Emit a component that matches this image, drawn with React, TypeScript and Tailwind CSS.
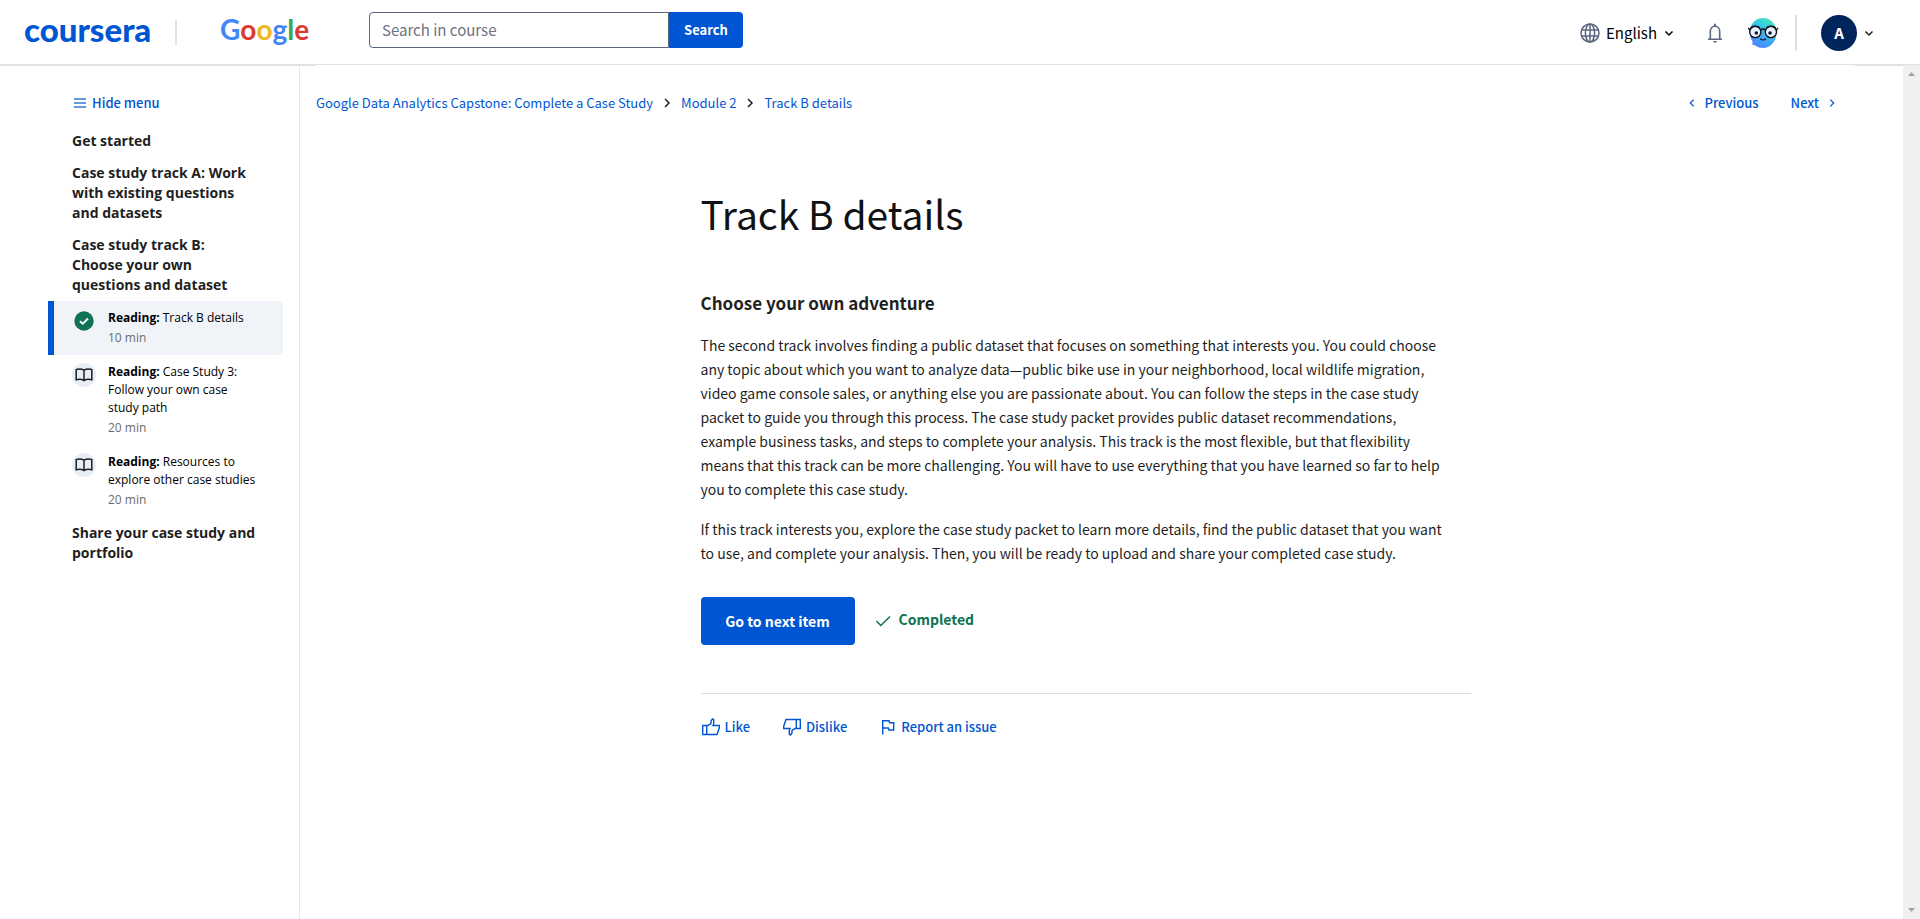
import React from "react";

type ReadingItem = { title: string; minutes: number; active?: boolean };

const readings: ReadingItem[] = [
  { title: "Track B details", minutes: 10, active: true },
  { title: "Case Study 3: Follow your own case study path", minutes: 20 },
  { title: "Resources to explore other case studies", minutes: 20 },
];

function Chevron({ d, className }: { d: string; className: string }) {
  return (
    <svg viewBox="0 0 12 12" className={className} fill="none" stroke="currentColor" strokeWidth="1.5" aria-hidden="true">
      <path d={d} />
    </svg>
  );
}
const DOWN = "M2.5 4.5L6 8l3.5-3.5";
const RIGHT = "M4 2l4 4-4 4";
const LEFT = "M8 2L4 6l4 4";

function Globe() {
  return (
    <svg viewBox="0 0 20 20" className="size-5 text-[#5b6780]" fill="none" stroke="currentColor" strokeWidth="1.5" aria-hidden="true">
      <circle cx="10" cy="10" r="9" />
      <ellipse cx="10" cy="10" rx="4.6" ry="9" />
      <path d="M10 1v18M1.5 7h17M1.5 13h17" />
    </svg>
  );
}

function Bell() {
  return (
    <svg viewBox="0 0 16 20" className="h-5 w-4 text-[#5b6780]" fill="none" stroke="currentColor" strokeWidth="1.6" aria-hidden="true">
      <path d="M1 16.3h14M3.3 16V8.6C3.3 5.6 5.2 3.2 8 3.2s4.7 2.4 4.7 5.4V16" />
      <path d="M8 .8V3" strokeWidth="2" />
      <path d="M6 18h4c-.3 1-1 1.5-2 1.5S6.3 19 6 18z" fill="currentColor" stroke="none" />
    </svg>
  );
}

function Mascot() {
  return (
    <svg viewBox="0 0 32 32" className="size-8" aria-hidden="true">
      <defs>
        <linearGradient id="mascot" x1="0.8" y1="0" x2="0.35" y2="1">
          <stop offset="0" stopColor="#4fe8b8" />
          <stop offset="0.35" stopColor="#33c9e6" />
          <stop offset="1" stopColor="#4a86ff" />
        </linearGradient>
      </defs>
      <path d="M16 1c8 0 13.500 6.200 13.500 14.500S24 31 16 31c-3.500 0-6-1-8.500-3H5.500v-3.500C3.500 22 3 19 3 15.500 3 7.200 8 1 16 1z" fill="url(#mascot)" />
      <circle cx="8.300" cy="15" r="5.600" fill="#e9f1ff" stroke="#111" strokeWidth="1.400" />
      <circle cx="23.900" cy="15" r="5.600" fill="#e9f1ff" stroke="#111" strokeWidth="1.400" />
      <path d="M13.700 13c1.200-1.400 3.500-1.400 4.700 0M3 13l-1.800-2M29.200 13l1.800-2M3.500 11.200C5.500 8.700 10.500 8.700 13 11M19.200 11c2.500-2.300 7.500-2.300 9.500.2" fill="none" stroke="#111" strokeWidth="1.400" />
      <circle cx="9.300" cy="16" r="1.800" fill="#10162c" />
      <circle cx="23" cy="16" r="1.800" fill="#10162c" />
      <path d="M13.200 21.700c1.200 1.700 4.500 1.700 5.700 0" fill="none" stroke="#10162c" strokeWidth="1.200" />
    </svg>
  );
}

function Thumb({ down }: { down?: boolean }) {
  return (
    <svg viewBox="0 0 20 18" className="h-[18px] w-5" fill="none" stroke="currentColor" strokeWidth="1.4" aria-hidden="true">
      <g transform={down ? "rotate(180 10 9)" : undefined}>
        <path d="M1.700 7.500h4v9h-4zM5.700 8.200L10 5.500V3l1.500-2 1.200.7v4l-.7 1.800h6.300v2.300L16 16.500H5.700" />
      </g>
    </svg>
  );
}

function OpenBook() {
  return (
    <span className="flex size-6 items-center justify-center rounded-full bg-[#e8eef7]">
      <svg viewBox="0 0 18 14" className="h-3.5 w-[18px] text-[#1f1f1f]" fill="none" stroke="currentColor" strokeWidth="1.5" aria-hidden="true">
        <path d="M9 2.200C7 1 4 .8 1.200 1.500v10.200C4 11 7 11.200 9 12.500c2-1.300 5-1.500 7.800-.8V1.500C14 .8 11 1 9 2.200zM9 2.200V12.500" />
      </svg>
    </span>
  );
}

function DoneBadge() {
  return (
    <span className="flex size-6 items-center justify-center">
      <svg viewBox="0 0 20 20" className="size-5" aria-hidden="true">
        <circle cx="10" cy="10" r="9.7" fill="#0f7253" />
        <path d="M6 10.300l2.700 2.500L14 7.500" fill="none" stroke="#fff" strokeWidth="1.9" />
      </svg>
    </span>
  );
}

function Header() {
  return (
    <header className="flex h-[66px] shrink-0 items-start justify-between border-b-2 border-[#e1e1e1] bg-white pl-6 pr-[45px]">
      <div className="flex items-start">
        <a href="#" className="flex h-16 w-32 items-center pb-1.5 font-['Lato'] text-[33px] font-black leading-none text-[#0056d2]">coursera</a>
        <span className="mt-5 ml-[23px] h-[25px] w-0.5 bg-[#e1e1e1]" />
        <a href="#" aria-label="Google" className="ml-[43px] flex h-16 w-[90px] items-center pb-1.5 font-['Lato'] text-[28px] font-bold leading-none">
          <span className="text-[#4285f4]">G</span>
          <span className="text-[#d93a32]">o</span>
          <span className="text-[#efb820]">o</span>
          <span className="text-[#4285f4]">g</span>
          <span className="text-[#34a853]">l</span>
          <span className="text-[#d93a32]">e</span>
        </a>
        <form className="ml-[59px] mt-3 flex h-9" onSubmit={(e) => e.preventDefault()}>
          <input
            type="text"
            aria-label="Search in course"
            placeholder="Search in course"
            className="w-[300px] rounded-l border border-[#5b6780] px-3 text-[15px] text-[#1f1f1f] outline-none placeholder:text-[#6b7280]"
          />
          <button type="submit" className="w-[74px] rounded-r bg-[#0056d2] text-[13px] font-bold text-white">Search</button>
        </form>
      </div>
      <div className="flex h-[66px] items-center">
        <button type="button" className="flex items-center gap-1.5 text-[15px] text-black">
          <Globe />
          <span>English</span>
          <Chevron d={DOWN} className="size-3" />
        </button>
        <button type="button" aria-label="Notifications" className="ml-8"><Bell /></button>
        <button type="button" aria-label="Coach" className="ml-6"><Mascot /></button>
        <span className="ml-4 h-9 w-0.5 bg-[#e1e1e1]" />
        <button type="button" aria-label="Account" className="ml-6 flex items-center gap-1.5 text-[#1f1f1f]">
          <span className="flex size-9 items-center justify-center rounded-full bg-[#00255d] text-[15px] font-bold text-white">A</span>
          <Chevron d={DOWN} className="size-3" />
        </button>
      </div>
    </header>
  );
}

function SectionLink({ children }: { children: React.ReactNode }) {
  return <a href="#" className="block py-1.5 pl-6 pr-6 text-sm font-bold text-[#1f1f1f]">{children}</a>;
}

function Sidebar() {
  return (
    <aside className="w-[300px] shrink-0 border-r border-[#e5e7f0] pl-12 pr-4">
      <button type="button" className="ml-[26px] mt-[27px] flex h-5 items-center gap-1.5 text-[13px] font-medium text-[#0056d2]">
        <svg viewBox="0 0 12 10" className="h-2.5 w-3 opacity-60" fill="currentColor" aria-hidden="true">
          <path d="M0 0h12v2H0zM0 4h12v2H0zM0 8h12v2H0z" />
        </svg>
        Hide menu
      </button>
      <nav className="mt-3 font-['Open_Sans',sans-serif]">
        <SectionLink>Get started</SectionLink>
        <SectionLink>Case study track A: Work with existing questions and datasets</SectionLink>
        <SectionLink>Case study track B: Choose your own questions and dataset</SectionLink>
        <ul>
          {readings.map((r) => (
            <li key={r.title}>
              <a
                href="#"
                className={
                  r.active
                    ? "flex gap-3 border-l-6 border-[#0056d2] bg-[#f0f4f9] py-2 pl-[18px] pr-6"
                    : "flex gap-3 border-l-6 border-transparent py-2 pl-[18px] pr-6"
                }
              >
                {r.active ? <DoneBadge /> : <OpenBook />}
                <span className="flex-1 text-xs leading-[18px] text-black">
                  <span className="block"><strong className="font-bold">Reading:</strong> {r.title}</span>
                  <span className="mt-0.5 block text-[#6b6b6b]">{r.minutes} min</span>
                </span>
              </a>
            </li>
          ))}
        </ul>
        <SectionLink>Share your case study and portfolio</SectionLink>
      </nav>
    </aside>
  );
}

function TopNav() {
  return (
    <div className="-mt-px ml-4 mr-12 flex h-[76px] items-center justify-between bg-white text-[13px] text-[#0056d2]">
      <nav aria-label="Breadcrumb" className="flex items-center">
        <a href="#">Google Data Analytics Capstone: Complete a Case Study</a>
        <Chevron d={RIGHT} className="mx-2 size-3 text-[#1f1f1f]" />
        <a href="#">Module 2</a>
        <Chevron d={RIGHT} className="mx-2 size-3 text-[#1f1f1f]" />
        <a href="#">Track B details</a>
      </nav>
      <div className="flex items-center gap-8 pr-[18px] font-medium">
        <a href="#" className="flex items-center gap-2"><Chevron d={LEFT} className="size-2.5" />Previous</a>
        <a href="#" className="flex items-center gap-2">Next<Chevron d={RIGHT} className="size-2.5" /></a>
      </div>
    </div>
  );
}

function Article() {
  return (
    <article className="ml-4 mr-12">
      <div className="mx-auto max-w-[770px] text-[#1f1f1f]">
        <h1 className="mt-[46px] text-[39px] leading-[52px] text-[#0f1114]">Track B details</h1>
        <h2 className="mt-[52px] text-[17px] leading-6 font-bold">Choose your own adventure</h2>
        <p className="mt-[18px] pr-5 text-sm leading-6">
          The second track involves finding a public dataset that focuses on something that interests you. You could choose any topic about which you want to analyze data—public bike use in your neighborhood, local wildlife migration, video game console sales, or anything else you are passionate about. You can follow the steps in the case study packet to guide you through this process. The case study packet provides public dataset recommendations, example business tasks, and steps to complete your analysis. This track is the most flexible, but that flexibility means that this track can be more challenging. You will have to use everything that you have learned so far to help you to complete this case study.
        </p>
        <p className="mt-4 pr-5 text-sm leading-6">
          If this track interests you, explore the case study packet to learn more details, find the public dataset that you want to use, and complete your analysis. Then, you will be ready to upload and share your completed case study.
        </p>
        <div className="mt-8 flex items-center gap-5">
          <button type="button" className="h-12 w-[154px] rounded bg-[#0056d2] text-sm font-bold text-white">Go to next item</button>
          <span className="flex items-center gap-2 text-sm font-bold text-[#0f7253]">
            <svg viewBox="0 0 16 16" className="size-4" fill="none" stroke="currentColor" strokeWidth="1.5" aria-hidden="true">
              <path d="M1.500 8l4.300 4.500L15 3.500" />
            </svg>
            <span className="pb-1">Completed</span>
          </span>
        </div>
        <hr className="mt-12 border-[#dadde0]" />
        <div className="mt-[23px] flex items-center gap-8 text-[13px] font-medium text-[#0056d2]">
          <button type="button" className="flex items-center gap-1"><Thumb />Like</button>
          <button type="button" className="flex items-center gap-1"><Thumb down />Dislike</button>
          <button type="button" className="flex items-center gap-1.5">
            <svg viewBox="0 0 16 16" className="size-4" fill="none" stroke="currentColor" strokeWidth="1.4" aria-hidden="true">
              <path d="M3.700 15.500V1.700H10l.7 2h4V11H10l-.7-2H3.700" />
            </svg>
            Report an issue
          </button>
        </div>
      </div>
    </article>
  );
}

export default function App() {
  return (
    <div className="flex min-h-screen flex-col bg-white font-['Noto_Sans_CJK_SC',sans-serif]">
      <Header />
      <div className="flex flex-1">
        <Sidebar />
        <main className="min-w-0 flex-1">
          <TopNav />
          <Article />
        </main>
        <div aria-hidden="true" className="-mt-px flex w-[17px] shrink-0 flex-col items-center justify-between bg-[#f0f0f0] py-[7px]">
          <svg viewBox="0 0 7 4" className="h-1 w-[7px] text-[#a3a3a3]" fill="currentColor"><path d="M3.500 0L7 4H0z" /></svg>
          <svg viewBox="0 0 7 4" className="h-1 w-[7px] text-[#a3a3a3]" fill="currentColor"><path d="M3.500 4L7 0H0z" /></svg>
        </div>
      </div>
    </div>
  );
}
